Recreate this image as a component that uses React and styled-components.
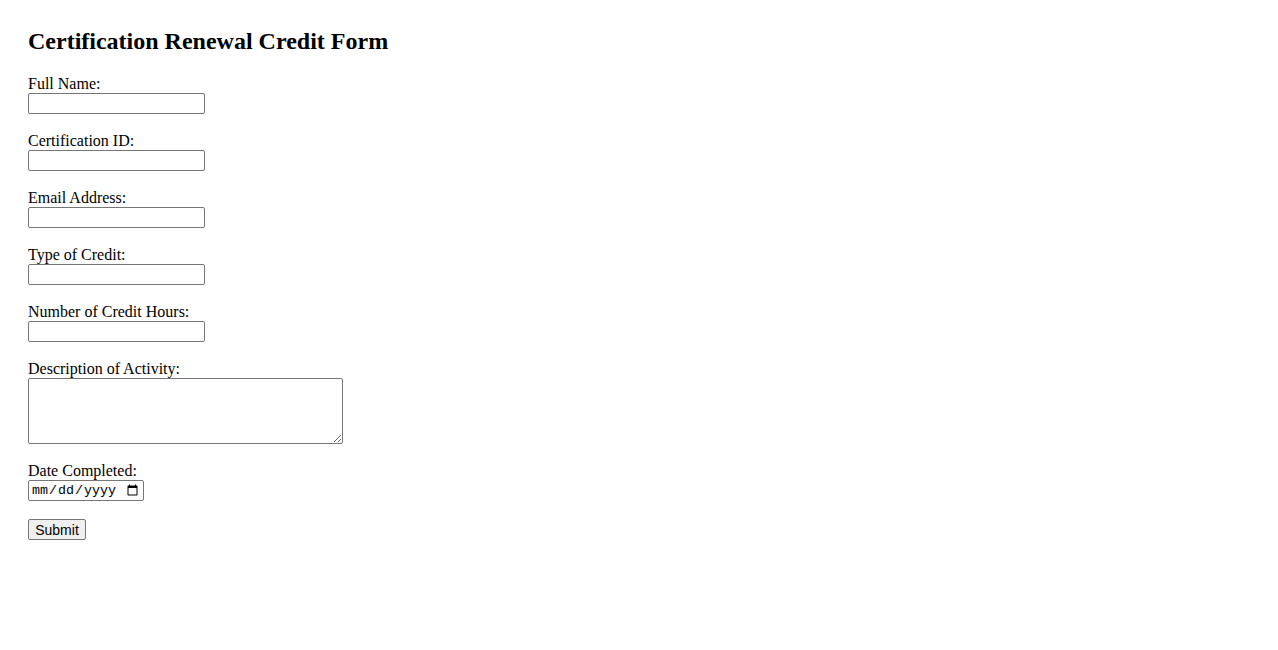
import React from "react";
import styled, { createGlobalStyle } from "styled-components";

const GlobalStyle = createGlobalStyle`
  body {
    margin: 0;
    padding: 28px;
    background: #ffffff;
    color: #000000;
    font-family: "Liberation Serif", "Times New Roman", serif;
    font-size: 16px;
  }
`;

const Title = styled.h2`
  margin: 0 0 21px;
  font-size: 24px;
  font-weight: bold;
  line-height: 26px;
`;

const Form = styled.form`
  display: flex;
  flex-direction: column;
  align-items: flex-start;
`;

const Field = styled.div`
  display: flex;
  flex-direction: column;
  align-items: flex-start;
  margin-bottom: 18px;
`;

const Label = styled.label`
  line-height: 18px;
  height: 18px;
`;

const TextInput = styled.input`
  box-sizing: border-box;
  width: ${(p) => p.$width || "177px"};
  height: 21px;
  margin: 0;
  padding: 1px 2px;
  border: 1px solid #767676;
  border-radius: 2px;
  font-size: 13.33px;
`;

const DateInput = styled(TextInput)`
  font-family: "Liberation Mono", "DejaVu Sans Mono", monospace;
`;

const TextArea = styled.textarea`
  box-sizing: border-box;
  width: 315px;
  height: 66px;
  margin: 0;
  padding: 2px;
  border: 1px solid #767676;
  border-radius: 2px;
  font-family: "Liberation Mono", monospace;
  font-size: 13.33px;
`;

const SubmitButton = styled.button`
  box-sizing: border-box;
  width: 58px;
  height: 21px;
  margin: 0;
  padding: 1px 6px;
  border: 1px solid #767676;
  border-radius: 2px;
  background: #efefef;
  font-family: "Liberation Sans", Arial, sans-serif;
  font-size: 14px;
  color: #000;
`;

const fields = [
  { id: "name", label: "Full Name:" },
  { id: "certId", label: "Certification ID:" },
  { id: "email", label: "Email Address:", type: "email" },
  { id: "creditType", label: "Type of Credit:" },
  { id: "hours", label: "Number of Credit Hours:", type: "number" },
];

export default function App() {
  return (
    <>
      <GlobalStyle />
      <Title>Certification Renewal Credit Form</Title>
      <Form onSubmit={(e) => e.preventDefault()}>
        {fields.map((f) => (
          <Field key={f.id}>
            <Label htmlFor={f.id}>{f.label}</Label>
            <TextInput id={f.id} type={f.type || "text"} />
          </Field>
        ))}
        <Field>
          <Label htmlFor="desc">Description of Activity:</Label>
          <TextArea id="desc" />
        </Field>
        <Field>
          <Label htmlFor="date">Date Completed:</Label>
          <DateInput id="date" type="date" $width="116px" />
        </Field>
        <SubmitButton type="submit">Submit</SubmitButton>
      </Form>
    </>
  );
}
